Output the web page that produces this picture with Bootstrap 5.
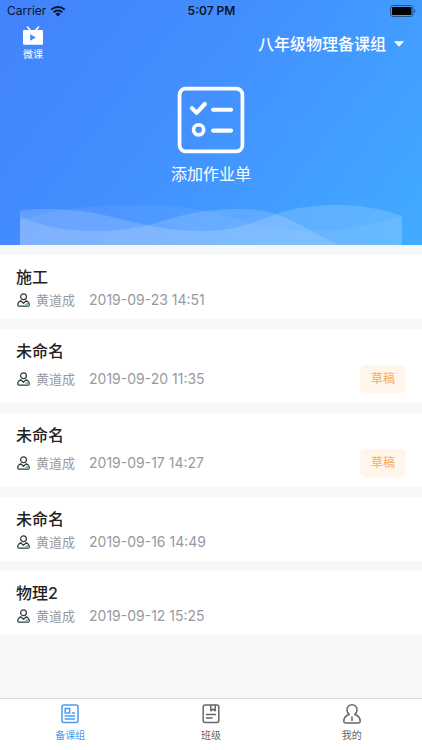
<!DOCTYPE html>
<html lang="zh-CN">
<head>
<meta charset="utf-8">
<meta name="viewport" content="width=device-width, initial-scale=1">
<title>备课组</title>
<link href="https://cdn.jsdelivr.net/npm/bootstrap@5.3.0/dist/css/bootstrap.min.css" rel="stylesheet">
<style>
  body { font-family: Inter, "Noto Sans CJK SC", sans-serif; background: #f5f7f9; color: #222326; }
  svg { display: block; }
  button { font-family: inherit; }
  .hero { background: linear-gradient(128deg, #4282fc 0%, #4390ff 45%, #40acff 100%); }
  .status-bar { height: 22px; padding: 0 6px 0 7px; font-size: 12px; color: #0b1426; }
  .status-bar .clock { font-weight: 600; }
  .plain-btn { background: none; border: 0; padding: 0; color: #fff; }
  .top-row { height: 44px; padding: 0 18px 0 22px; }
  .micro-label { font-size: 10px; line-height: 16px; }
  .group-btn { font-size: 16px; line-height: 24px; font-weight: 500; }
  .add-btn { margin-top: 20px; font-size: 16px; line-height: 24px; }
  .waves { margin: 19px 20px 0; height: 40px; }
  #sheets { gap: 10px; padding: 10px 0; }
  .sheet { padding: 11px 16px 7px; background: #fff; color: inherit; }
  .sheet h2 { font-size: 16px; line-height: 22px; font-weight: 500; }
  .meta { min-height: 24px; font-size: 13px; line-height: 18px; color: #98999f; }
  .meta time { font-size: 14px; margin-left: 14px; }
  .draft { font-size: 12px; line-height: 20px; padding: 4px 11px; margin: 3px 0; border-radius: 5px; background: #fff5ea; color: #f7ae50; }
  .tabs { border-top: 1px solid #dcdde1; background: #fff; height: 52px; }
  .tabs a { color: #66676a; font-size: 10px; line-height: 16px; padding-top: 4px; }
  .tabs a span { padding-top: 2px; }
  .tabs a.current { color: #4a9af0; }
</style>
</head>
<body>
<div class="d-flex flex-column min-vh-100">
  <header class="hero">
    <div class="status-bar row g-0 align-items-center">
      <div class="col d-flex align-items-center gap-1">
        <span>Carrier</span>
        <svg width="16" height="12" viewBox="0 0 16 12" aria-hidden="true"><g fill="none" stroke="#0b1426" stroke-width="2"><path d="M1.3 4.6a9.6 9.6 0 0 1 13.4 0"/><path d="M3.8 7.2a6 6 0 0 1 8.4 0"/></g><path d="M8 11.4 5.6 9a3.5 3.5 0 0 1 4.8 0z" fill="#0b1426"/></svg>
      </div>
      <div class="col-auto clock">5:07 PM</div>
      <div class="col d-flex justify-content-end">
        <svg width="26" height="12" viewBox="0 0 26 12" aria-hidden="true"><rect x=".5" y=".5" width="22.5" height="11" rx="2.5" fill="none" stroke="#24548c"/><rect x="2" y="2" width="19.5" height="8" rx="1" fill="#000"/><path d="M24.2 4v4c1.6-.6 1.6-3.4 0-4z" fill="#24548c"/></svg>
      </div>
    </div>
    <div class="top-row d-flex justify-content-between align-items-center">
      <button type="button" class="plain-btn d-flex flex-column align-items-center">
        <svg width="22" height="20" viewBox="0 0 22 20" aria-hidden="true"><path d="M5.500 1 8.500 4.500M16.500 1 13.500 4.500" stroke="#fff" stroke-width="1.600" stroke-linecap="round"/><path fill="#fff" fill-rule="evenodd" d="M2.300 4h17.400q1.300 0 1.300 1.300v12.200q0 1.300-1.300 1.300h-17.400q-1.300 0-1.300-1.300V5.300q0-1.300 1.300-1.300zM8.200 8.300v6.400l5.600-3.200z"/></svg>
        <span class="micro-label">微课</span>
      </button>
      <button type="button" class="plain-btn group-btn d-flex align-items-center gap-2">八年级物理备课组
        <svg width="10" height="6" viewBox="0 0 10 6" aria-hidden="true"><path d="M0 .3h10L5 5.800z" fill="#fff"/></svg>
      </button>
    </div>
    <button type="button" class="plain-btn add-btn d-flex flex-column align-items-center mx-auto gap-2">
      <svg width="68" height="68" viewBox="0 0 66 66" fill="none" stroke="#fff" stroke-linecap="round" stroke-linejoin="round" aria-hidden="true"><rect x="2.500" y="2.500" width="61" height="61" rx="6" stroke-width="3.600"/><path d="M14.500 21.500 19 26l8-8.500M35 23h17.500M35 43.300h17.500" stroke-width="4"/><circle cx="21" cy="42.500" r="4.900" stroke-width="3.600"/></svg>
      <span>添加作业单</span>
    </button>
    <div class="waves">
      <svg width="100%" height="40" viewBox="0 0 382 40" preserveAspectRatio="none" fill="#fff" aria-hidden="true">
        <path opacity=".06" d="M0 16C25 6 65 0 113 0C158 0 178 4 200 9C230 17 250 26 290 26C325 26 350 20 382 11V40H0z"/>
        <path opacity=".16" d="M0 6C8 4 18 4 30 4C90 4 120 26 180 26C246 26 242 0 318 0C342 0 362 4 382 11V40H0z"/>
        <path opacity=".15" d="M0 11C20 21 45 26 75 26C145 26 145 4 222 4C262 4 280 22 319 40H0z"/>
      </svg>
    </div>
  </header>

  <main class="flex-grow-1 d-flex flex-column" id="sheets"></main>

  <nav class="tabs sticky-bottom row g-0 text-center">
    <a href="#group" class="col current text-decoration-none d-flex flex-column align-items-center" aria-current="page">
      <svg width="20" height="22" viewBox="0 0 20 22" fill="none" stroke="currentColor" stroke-width="1.500" stroke-linecap="round" aria-hidden="true"><rect x="2" y="2" width="16" height="17.500" rx="2"/><rect x="5.200" y="5.500" width="4.500" height="4.500"/><path d="M12.500 10H14.500M5.200 13H14.500M5.200 16H14.500"/></svg>
      <span>备课组</span>
    </a>
    <a href="#class" class="col text-decoration-none d-flex flex-column align-items-center">
      <svg width="20" height="22" viewBox="0 0 20 22" fill="none" stroke="currentColor" stroke-width="1.500" stroke-linecap="round" stroke-linejoin="round" aria-hidden="true"><rect x="2.200" y="2" width="15.600" height="17.500" rx="2"/><path d="M9.800 2.200v5.600l2.200-1.600 2.200 1.600V2.200M5.500 11.500h9M5.500 15h5.500"/></svg>
      <span>班级</span>
    </a>
    <a href="#me" class="col text-decoration-none d-flex flex-column align-items-center">
      <svg width="20" height="22" viewBox="0 0 20 22" fill="none" stroke="currentColor" stroke-width="1.500" stroke-linecap="round" stroke-linejoin="round" aria-hidden="true"><path d="M7.300 11.300C5.600 10 4.900 8.400 4.900 6.800a5.100 5.100 0 0 1 10.200 0c0 1.600-.7 3.200-2.400 4.500 3.600 1.400 5.500 3.700 5.500 7q0 1.700-1.600 1.700H3.400q-1.600 0-1.600-1.700c0-3.300 1.900-5.600 5.500-7zM10 14v3.500"/></svg>
      <span>我的</span>
    </a>
  </nav>
</div>

<template id="sheet-template">
  <a href="#sheet" class="sheet d-block text-decoration-none">
    <h2 class="m-0"></h2>
    <div class="meta d-flex align-items-center">
      <svg class="me-1" width="16" height="16" viewBox="0 0 16 16" fill="none" stroke="#333a40" stroke-width="1.200" stroke-linejoin="round" aria-hidden="true"><circle cx="7.500" cy="4.700" r="2.900"/><path d="M4.700 8.700C2.700 9.500 1.700 11 1.700 13q0 1.200 1.200 1.200h9.200q1.200 0 1.200-1.200c0-2-1-3.500-3-4.300L7.500 11.300z"/><path d="M8.500 12.900 11.500 10.500l1.300 2.900H9z" fill="#5fd3ad" stroke="none"/></svg>
      <span class="author"></span>
      <time></time>
    </div>
  </a>
</template>

<script src="https://cdn.jsdelivr.net/npm/bootstrap@5.3.0/dist/js/bootstrap.bundle.min.js"></script>
<script>
  const sheets = [
    { title: '施工', time: '2019-09-23 14:51' },
    { title: '未命名', time: '2019-09-20 11:35', draft: true },
    { title: '未命名', time: '2019-09-17 14:27', draft: true },
    { title: '未命名', time: '2019-09-16 14:49' },
    { title: '物理2', time: '2019-09-12 15:25' }
  ];
  const list = document.getElementById('sheets');
  for (const s of sheets) {
    const node = document.getElementById('sheet-template').content.cloneNode(true);
    node.querySelector('h2').textContent = s.title;
    node.querySelector('.author').textContent = '黄道成';
    node.querySelector('time').textContent = s.time;
    if (s.draft) {
      const tag = document.createElement('span');
      tag.className = 'draft ms-auto';
      tag.textContent = '草稿';
      node.querySelector('.meta').append(tag);
    }
    list.append(node);
  }
</script>
</body>
</html>
